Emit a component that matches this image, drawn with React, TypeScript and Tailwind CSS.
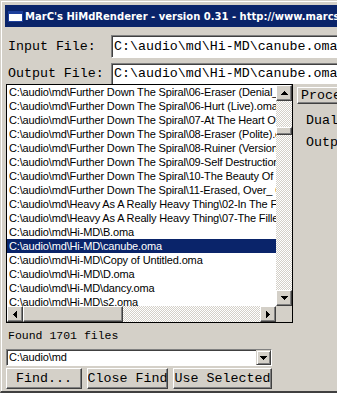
import React from 'react';

const mono = "font-['Courier_New','Liberation_Mono',monospace]";
const sans = "font-['Arial','Liberation_Sans',sans-serif]";

const raised =
  'bg-[#d4d0c8] border border-t-white border-l-white border-r-[#404040] border-b-[#404040] shadow-[inset_-1px_-1px_0_#808080]';
const sunken =
  'bg-white border border-t-[#808080] border-l-[#808080] border-r-white border-b-white shadow-[inset_1px_1px_0_#404040]';
const track =
  'bg-[repeating-conic-gradient(#ffffff_0_25%,#d4d0c8_0_50%)] bg-[length:2px_2px]';

const files = [
  'C:\\audio\\md\\Further Down The Spiral\\06-Eraser (Denial_ Realization).oma',
  'C:\\audio\\md\\Further Down The Spiral\\06-Hurt (Live).oma',
  'C:\\audio\\md\\Further Down The Spiral\\07-At The Heart Of It All.oma',
  'C:\\audio\\md\\Further Down The Spiral\\08-Eraser (Polite).oma',
  'C:\\audio\\md\\Further Down The Spiral\\08-Ruiner (Version).oma',
  'C:\\audio\\md\\Further Down The Spiral\\09-Self Destruction Part Three.oma',
  'C:\\audio\\md\\Further Down The Spiral\\10-The Beauty Of Being Numb.oma',
  'C:\\audio\\md\\Further Down The Spiral\\11-Erased, Over_ Out.oma',
  'C:\\audio\\md\\Heavy As A Really Heavy Thing\\02-In The Fall.oma',
  'C:\\audio\\md\\Heavy As A Really Heavy Thing\\07-The Filler.oma',
  'C:\\audio\\md\\Hi-MD\\B.oma',
  'C:\\audio\\md\\Hi-MD\\canube.oma',
  'C:\\audio\\md\\Hi-MD\\Copy of Untitled.oma',
  'C:\\audio\\md\\Hi-MD\\D.oma',
  'C:\\audio\\md\\Hi-MD\\dancy.oma',
  'C:\\audio\\md\\Hi-MD\\s2.oma',
];

const Tri = ({ dir }: { dir: 'up' | 'down' | 'left' | 'right' }) => {
  const pts = {
    up: '3.5,0 7,4 0,4',
    down: '0,0 7,0 3.5,4',
    left: '4,0 4,7 0,3.5',
    right: '0,0 0,7 4,3.5',
  }[dir];
  const vert = dir === 'up' || dir === 'down';
  return (
    <svg width={vert ? 7 : 4} height={vert ? 4 : 7} shapeRendering="crispEdges">
      <polygon points={pts} fill="#000" />
    </svg>
  );
};

const ArrowBtn = ({ dir }: { dir: 'up' | 'down' | 'left' | 'right' }) => (
  <div className={`w-[16px] h-[16px] shrink-0 flex items-center justify-center ${raised}`}>
    <Tri dir={dir} />
  </div>
);

export default function App() {
  return (
    <div className="w-[337px] h-[393px] overflow-hidden bg-[#d4d0c8]">
      <div className="h-[393px] pl-[4px] pt-[4px] border-l border-t border-[#d4d0c8] shadow-[inset_1px_1px_0_#ffffff] border-b-2 border-b-[#404040]">
        {/* title bar */}
        <div className="h-[22px] flex items-center bg-[#0a246a] pl-[3px] gap-[2px] whitespace-nowrap overflow-hidden">
          <div className="w-[15px] h-[11px] shrink-0 bg-white border border-[#1d3f9a] border-t-[3px]" />
          <span className="text-white font-bold text-[10px] font-['DejaVu_Sans',sans-serif]">
            MarC's HiMdRenderer - version 0.31 - http://www.marcsmd.net
          </span>
        </div>

        {/* input rows */}
        <div className={`mt-[8px] h-[23px] flex items-center whitespace-nowrap ${mono} text-[13.3px]`}>
          <div className="w-[106px] shrink-0 pl-[3px] text-black">Input File:</div>
          <div className={`h-[23px] w-[300px] shrink-0 flex items-center pl-[2px] ${sunken}`}>
            C:\audio\md\Hi-MD\canube.oma
          </div>
        </div>
        <div className={`mt-[5px] h-[21px] flex items-center whitespace-nowrap ${mono} text-[13.3px]`}>
          <div className="w-[106px] shrink-0 pl-[3px] text-black">Output File:</div>
          <div className={`h-[21px] w-[300px] shrink-0 flex items-center pl-[2px] border-b-0 ${sunken}`}>
            C:\audio\md\Hi-MD\canube.oma
          </div>
        </div>

        {/* main area */}
        <div className="flex">
          <div className="w-[288px] shrink-0 pl-[1px]">
            {/* list box */}
            <div className="w-[287px] h-[239px] border border-black bg-white flex flex-col">
              <div className="flex h-[221px]">
                <div className={`w-[269px] overflow-hidden ${sans} text-[11px] tracking-[-0.15px]`}>
                  {files.map((f, i) => (
                    <div
                      key={f}
                      className={`h-[14px] leading-[14px] pl-[2px] whitespace-nowrap ${
                        i === 11 ? 'bg-[#0a246a] text-white' : 'text-black'
                      }`}
                    >
                      {f}
                    </div>
                  ))}
                </div>
                <div className={`w-[16px] flex flex-col ${track}`}>
                  <ArrowBtn dir="up" />
                  <div className={`mt-[26px] h-[8px] ${raised}`} />
                  <div className="flex-1" />
                  <ArrowBtn dir="down" />
                </div>
              </div>
              <div className="flex h-[16px]">
                <div className={`w-[269px] flex ${track}`}>
                  <ArrowBtn dir="left" />
                  <div className={`w-[100px] h-[16px] ${raised}`} />
                  <div className="flex-1" />
                  <ArrowBtn dir="right" />
                </div>
                <div className="w-[16px] bg-[#d4d0c8]" />
              </div>
            </div>

            <div className={`h-[26px] flex items-center pl-[2px] ${mono} text-[11.5px] text-black`}>
              Found 1701 files
            </div>

            {/* combo */}
            <div className={`w-[266px] h-[17px] flex items-center ${sunken}`}>
              <div className={`flex-1 pl-[2px] ${sans} text-[11px] tracking-[-0.15px] text-black`}>
                C:\audio\md
              </div>
              <div className="w-[15px] h-[15px] flex items-center justify-center bg-[#d4d0c8] border border-t-[#d4d0c8] border-l-[#d4d0c8] border-r-[#404040] border-b-[#404040] shadow-[inset_1px_1px_0_#ffffff,inset_-1px_-1px_0_#808080]">
                <Tri dir="down" />
              </div>
            </div>

            {/* buttons */}
            <div className={`mt-[2px] flex gap-[5px] ${mono} text-[13.3px] text-black`}>
              <div className={`w-[76px] h-[21px] flex items-center justify-center overflow-hidden whitespace-nowrap ${raised}`}>
                Find...
              </div>
              <div className={`w-[81px] h-[21px] flex items-center justify-center overflow-hidden whitespace-nowrap ${raised}`}>
                Close Find
              </div>
              <div className={`w-[99px] h-[21px] flex items-center justify-center overflow-hidden whitespace-nowrap ${raised}`}>
                Use Selected
              </div>
            </div>
          </div>

          {/* right panel */}
          <div className={`flex-1 overflow-hidden pl-[4px] pt-[3px] whitespace-nowrap ${mono} text-[13.3px] text-black`}>
            <div className={`w-[70px] h-[17px] flex items-center pl-[3px] overflow-hidden ${raised}`}>Process</div>
            <div className="mt-[9px] pl-[9px] leading-[16px]">Dual</div>
            <div className="mt-[6px] pl-[9px] leading-[16px]">Output</div>
          </div>
        </div>
      </div>
    </div>
  );
}
